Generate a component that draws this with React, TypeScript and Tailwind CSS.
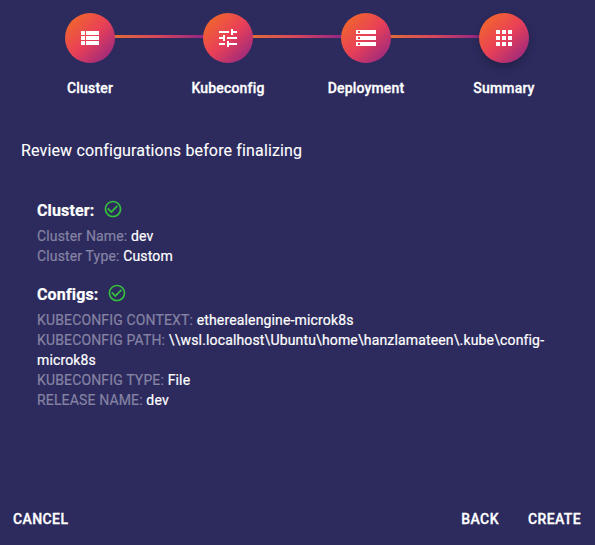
import { Fragment } from "react";

const VIEW_LIST =
  "M3 14h4v-4H3v4zm0 5h4v-4H3v4zM3 9h4V5H3v4zm5 5h13v-4H8v4zm0 5h13v-4H8v4zM8 5v4h13V5H8z";
const TUNE =
  "M3 17v2h6v-2H3zM3 5v2h10V5H3zm10 16v-2h8v-2h-8v-2h-2v6h2zM7 9v2H3v2h4v2h2V9H7zm14 4v-2H11v2h10zm-6-4h2V7h4V5h-4V3h-2v6z";
const STORAGE =
  "M2 20h20v-4H2v4zm2-3h2v2H4v-2zM2 4v4h20V4H2zm4 3H4V5h2v2zm-4 7h20v-4H2v4zm2-3h2v2H4v-2z";
const APPS =
  "M4 8h4V4H4v4zm6 12h4v-4h-4v4zm-6 0h4v-4H4v4zm0-6h4v-4H4v4zm6 0h4v-4h-4v4zm6-10v4h4V4h-4zm-6 4h4V4h-4v4zm6 6h4v-4h-4v4zm0 6h4v-4h-4v4z";
const CHECK =
  "M16.59 7.58L10 14.17l-3.59-3.58L5 12l5 5 8-8zM12 2C6.48 2 2 6.48 2 12s4.48 10 10 10 10-4.48 10-10S17.52 2 12 2zm0 18c-4.42 0-8-3.58-8-8s3.58-8 8-8 8 3.58 8 8-3.58 8-8 8z";

const steps = [
  { label: "Cluster", icon: VIEW_LIST },
  { label: "Kubeconfig", icon: TUNE },
  { label: "Deployment", icon: STORAGE },
  { label: "Summary", icon: APPS },
];

const sections = [
  {
    title: "Cluster:",
    rows: [
      ["Cluster Name:", "dev"],
      ["Cluster Type:", "Custom"],
    ],
  },
  {
    title: "Configs:",
    rows: [
      ["KUBECONFIG CONTEXT:", "etherealengine-microk8s"],
      ["KUBECONFIG PATH:", "\\\\wsl.localhost\\Ubuntu\\home\\hanzlamateen\\.kube\\config-microk8s"],
      ["KUBECONFIG TYPE:", "File"],
      ["RELEASE NAME:", "dev"],
    ],
  },
];

function Icon({ path, className }: { path: string; className: string }) {
  return (
    <svg viewBox="0 0 24 24" fill="currentColor" className={className}>
      <path d={path} />
    </svg>
  );
}

function Stepper() {
  return (
    <div className="w-[552px]">
      <div className="flex items-center px-11">
        {steps.map((step, i) => (
          <Fragment key={step.label}>
            {i > 0 && (
              <div className="-mx-[5px] mb-[3px] h-[3px] flex-1 bg-[linear-gradient(95deg,#e07035_0%,#d8455c_50%,#8a2387_100%)]" />
            )}
            <div
              className={`z-10 flex size-[50px] shrink-0 items-center justify-center rounded-full bg-[linear-gradient(136deg,#f27121_0%,#e94057_50%,#8a2387_100%)] ${
                i === steps.length - 1 ? "shadow-[0_4px_10px_0_rgba(0,0,0,0.25)]" : ""
              }`}
            >
              <Icon path={step.icon} className="size-6" />
            </div>
          </Fragment>
        ))}
      </div>
      <div className="mt-[15px] grid grid-cols-4 text-center text-sm font-medium tracking-[0.17px] [-webkit-text-stroke:0.3px]">
        {steps.map((step) => (
          <span key={step.label}>{step.label}</span>
        ))}
      </div>
    </div>
  );
}

export default function App() {
  return (
    <div className="flex h-[545px] w-[595px] flex-col bg-[#2d2b5e] pt-[13px] font-['Roboto',sans-serif] text-white">
      <main className="flex-1 px-[21px]">
        <Stepper />
        <p className="mt-[41px] text-base tracking-[0.15px] [-webkit-text-stroke:0.1px]">
          Review configurations before finalizing
        </p>
        <div className="mt-9 flex flex-col gap-4 px-4">
          {sections.map((section) => (
            <section key={section.title}>
              <div className="flex h-6 items-center">
                <h2 className="text-base font-bold tracking-[0.15px] [-webkit-text-stroke:0.2px]">
                  {section.title}
                </h2>
                <Icon path={CHECK} className="mb-1 ml-2 size-5 self-start text-[#36c03c]" />
              </div>
              <div className="mt-[3px] mb-px text-sm leading-5 tracking-[0.15px] [-webkit-text-stroke:0.2px]">
                {section.rows.map(([name, value]) => (
                  <p key={name}>
                    <span className="text-[#8583a3]">{name}</span> {value}
                  </p>
                ))}
              </div>
            </section>
          ))}
        </div>
      </main>
      <footer className="flex gap-[29px] pr-3.5 pb-3.5 pl-[13px] text-sm leading-6 font-medium tracking-[0.4px] [-webkit-text-stroke:0.3px]">
        <button className="mr-auto">CANCEL</button>
        <button>BACK</button>
        <button>CREATE</button>
      </footer>
    </div>
  );
}
